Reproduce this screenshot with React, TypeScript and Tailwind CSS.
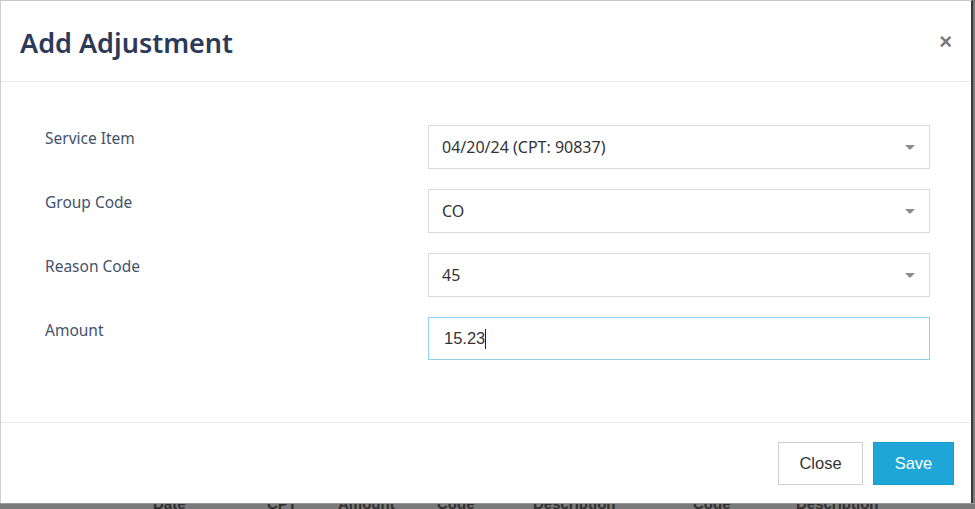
const fields = [
  { label: "Service Item", value: "04/20/24 (CPT: 90837)" },
  { label: "Group Code", value: "CO" },
  { label: "Reason Code", value: "45" },
];

const headers = [
  { text: "Date", left: "left-[153px]" },
  { text: "CPT", left: "left-[267px]" },
  { text: "Amount", left: "left-[338px]" },
  { text: "Code", left: "left-[437px]" },
  { text: "Description", left: "left-[533px]" },
  { text: "Code", left: "left-[693px]" },
  { text: "Description", left: "left-[796px]" },
];

const Caret = () => (
  <span className="w-0 h-0 border-l-[5px] border-r-[5px] border-t-[5px] border-l-transparent border-r-transparent border-t-[#8c8c8c]" />
);

const App = () => {
  return (
    <div className="w-[975px] h-[509px] bg-[#7a7a7a] overflow-hidden flex flex-col font-['Noto_Sans',sans-serif]">
      <div className="w-[973px] h-[503px] shrink-0 bg-white border-l border-t border-l-[#cfcfcf] border-t-[#c8c8c8] border-r-2 border-r-[#3a3a3a] flex flex-col">
        <div className="h-[81px] flex items-center justify-between pl-[19px] pr-[19px] border-b border-[#e5eaf0]">
          <h2 className="text-[27px] font-semibold text-[#2c3a58] leading-none pt-[2px]">
            Add Adjustment
          </h2>
          <span className="text-[22px] font-bold text-[#7a7a7a] leading-none font-['Liberation_Sans',sans-serif] pt-[2px]">
            ×
          </span>
        </div>

        <div className="flex-1 flex flex-col gap-[20px] pt-[43px] pl-[44px] pr-[41px] border-b border-[#e5eaf0]">
          {fields.map((f) => (
            <div key={f.label} className="flex items-start">
              <div className="w-[383px] text-[15.5px] text-[#44516a] pt-[2px]">{f.label}</div>
              <div className="flex-1 h-[44px] border border-[#d9d9d9] flex items-center justify-between pl-[13px] pr-[14px]">
                <span className="text-[16px] text-[#333]">{f.value}</span>
                <Caret />
              </div>
            </div>
          ))}
          <div className="flex items-start">
            <div className="w-[383px] text-[15.5px] text-[#44516a] pt-[2px]">Amount</div>
            <div className="flex-1 h-[43px] border border-[#8ed3ec] flex items-center pl-[15px]">
              <span className="text-[16.5px] text-[#333] font-['Liberation_Sans',sans-serif]">15.23</span>
              <span className="w-px h-[20px] bg-[#222]" />
            </div>
          </div>
        </div>

        <div className="h-[80px] shrink-0 flex items-center justify-end gap-[10px] pr-[17px] pt-[1px]">
          <button className="w-[85px] h-[43px] border border-[#cfcfcf] bg-white text-[16.5px] text-[#333] font-['Liberation_Sans',sans-serif]">
            Close
          </button>
          <button className="w-[81px] h-[43px] bg-[#1fa6d8] border border-[#1a9bcc] text-[16.5px] text-white font-['Liberation_Sans',sans-serif]">
            Save
          </button>
        </div>
      </div>
      <div className="relative h-[6px] border-t border-[#9a9a9a] overflow-hidden">
        {headers.map((h, i) => (
          <span
            key={i}
            className={`absolute ${h.left} -top-[11px] text-[15px] font-bold text-[#2f2f2f] font-['Liberation_Sans',sans-serif]`}
          >
            {h.text}
          </span>
        ))}
      </div>
    </div>
  );
};

export default App;
